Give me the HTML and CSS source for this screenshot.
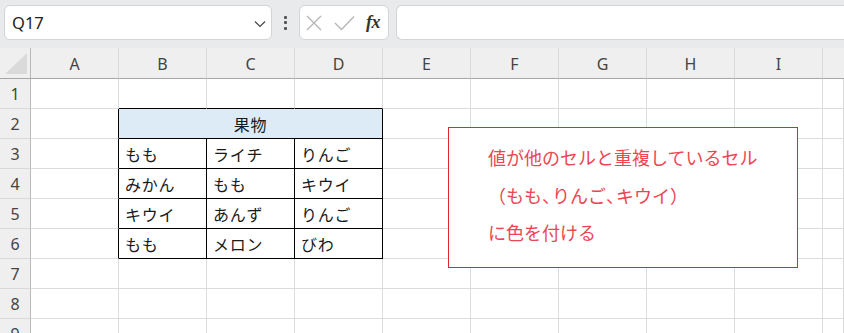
FILE: index.html
```html
<!DOCTYPE html>
<html lang="ja">
<head>
<meta charset="utf-8">
<title>Excel</title>
<link rel="stylesheet" href="styles.css">
</head>
<body>
<div class="toolbar">
  <div class="namebox">
    <span class="name">Q17</span>
    <svg class="chev" width="12" height="8" viewBox="0 0 12 8"><path d="M1 1.5 L6 6.5 L11 1.5" fill="none" stroke="#444" stroke-width="1.2"/></svg>
  </div>
  <div class="dots"><i></i><i></i><i></i></div>
  <div class="fxbox">
    <svg width="16" height="16" viewBox="0 0 16 16"><path d="M1 1 L15 15 M15 1 L1 15" stroke="#b4b4b4" stroke-width="1.3" fill="none"/></svg>
    <svg width="21" height="16" viewBox="0 0 21 16"><path d="M1 8 L7.5 14.5 L20 1.5" stroke="#b4b4b4" stroke-width="1.3" fill="none"/></svg>
    <span class="fx">fx</span>
  </div>
  <div class="formula"></div>
</div>
<div class="sheet">
  <div class="grid">
    <div class="corner"><svg width="23" height="22" viewBox="0 0 23 22"><path d="M22 0 L22 21 L0 21 Z" fill="#dadada"/></svg></div>
    <div class="ch">A</div><div class="ch">B</div><div class="ch">C</div><div class="ch">D</div><div class="ch">E</div><div class="ch">F</div><div class="ch">G</div><div class="ch">H</div><div class="ch">I</div><div class="ch last"></div>

    <div class="rh">1</div><div class="c"></div><div class="c tb"></div><div class="c tb"></div><div class="c tb"></div><div class="c"></div><div class="c"></div><div class="c"></div><div class="c"></div><div class="c"></div><div class="c"></div>

    <div class="rh">2</div><div class="c tr"></div><div class="c head">果物</div><div class="c"></div><div class="c"></div><div class="c"></div><div class="c"></div><div class="c"></div><div class="c"></div>

    <div class="rh">3</div><div class="c tr"></div><div class="c t">もも</div><div class="c t">ライチ</div><div class="c t">りんご</div><div class="c"></div><div class="c"></div><div class="c"></div><div class="c"></div><div class="c"></div><div class="c"></div>

    <div class="rh">4</div><div class="c tr"></div><div class="c t">みかん</div><div class="c t">もも</div><div class="c t">キウイ</div><div class="c"></div><div class="c"></div><div class="c"></div><div class="c"></div><div class="c"></div><div class="c"></div>

    <div class="rh">5</div><div class="c tr"></div><div class="c t">キウイ</div><div class="c t">あんず</div><div class="c t">りんご</div><div class="c"></div><div class="c"></div><div class="c"></div><div class="c"></div><div class="c"></div><div class="c"></div>

    <div class="rh">6</div><div class="c tr"></div><div class="c t">もも</div><div class="c t">メロン</div><div class="c t">びわ</div><div class="c"></div><div class="c"></div><div class="c"></div><div class="c"></div><div class="c"></div><div class="c"></div>

    <div class="rh">7</div><div class="c"></div><div class="c"></div><div class="c"></div><div class="c"></div><div class="c"></div><div class="c"></div><div class="c"></div><div class="c"></div><div class="c"></div><div class="c"></div>

    <div class="rh">8</div><div class="c"></div><div class="c"></div><div class="c"></div><div class="c"></div><div class="c"></div><div class="c"></div><div class="c"></div><div class="c"></div><div class="c"></div><div class="c"></div>

    <div class="rh">9</div><div class="c"></div><div class="c"></div><div class="c"></div><div class="c"></div><div class="c"></div><div class="c"></div><div class="c"></div><div class="c"></div><div class="c"></div><div class="c"></div>
  </div>
  <div class="note">
    <p>値が他のセルと重複しているセル</p>
    <p>（もも<span class="cm">、</span>りんご<span class="cm">、</span>キウイ）</p>
    <p>に色を付ける</p>
  </div>
</div>
</body>
</html>
```

FILE: styles.css
```css
html, body {
  margin: 0;
  padding: 0;
  background: #ffffff;
  overflow: hidden;
}
body {
  width: 844px;
  height: 333px;
  font-family: "Noto Sans", "Noto Sans CJK JP", sans-serif;
}
.toolbar {
  height: 48px;
  background: #e9eaec;
  display: flex;
  align-items: flex-start;
  padding: 5px 0 0 4px;
  box-sizing: border-box;
}
.namebox {
  width: 268px;
  height: 35px;
  box-sizing: border-box;
  background: #fff;
  border: 1px solid #d3d4d6;
  border-radius: 6px;
  display: flex;
  align-items: center;
  justify-content: space-between;
  padding: 0 5px 0 7px;
}
.name {
  font-size: 16.5px;
  color: #222;
  font-family: "Noto Sans", sans-serif;
}
.chev { margin-top: 2px; }
.dots {
  width: 27px;
  height: 35px;
  display: flex;
  flex-direction: column;
  align-items: center;
  justify-content: center;
  gap: 2.5px;
}
.dots i {
  display: block;
  width: 3px;
  height: 3px;
  background: #555;
  border-radius: 1px;
}
.fxbox {
  width: 90px;
  height: 35px;
  box-sizing: border-box;
  background: #fff;
  border: 1px solid #d3d4d6;
  border-radius: 6px;
  display: flex;
  align-items: center;
  padding: 0 0 0 6px;
  gap: 12px;
}
.fx {
  font-family: "Liberation Serif", serif;
  font-style: italic;
  font-weight: bold;
  font-size: 18px;
  color: #333;
  margin-left: -1px;
  letter-spacing: -0.5px;
}
.formula {
  margin-left: 7px;
  flex: 1;
  height: 35px;
  background: #fff;
  border: 1px solid #d3d4d6;
  border-right: none;
  border-radius: 6px 0 0 6px;
  box-sizing: border-box;
}
.sheet {
  position: relative;
}
.grid {
  display: grid;
  grid-template-columns: 31px repeat(9, 88px) 1fr;
  grid-template-rows: 31px;
  grid-auto-rows: 30px;
}
.grid > div {
  box-sizing: border-box;
}
.corner {
  background: #efefef;
  border-right: 1px solid #b9b9b9;
  border-bottom: 1px solid #a6a6a6;
  display: flex;
  align-items: flex-start;
  padding: 5px 0 0 5px;
}
.ch {
  background: #efefef;
  border-right: 1px solid #d8d8d8;
  border-bottom: 1px solid #a6a6a6;
  display: flex;
  align-items: center;
  justify-content: center;
  font-size: 16px;
  color: #444;
  padding-top: 1px;
}
.ch.last { border-right: none; }
.rh {
  background: #efefef;
  border-right: 1px solid #b9b9b9;
  border-bottom: 1px solid #d8d8d8;
  display: flex;
  align-items: center;
  justify-content: center;
  font-size: 16px;
  color: #444;
}
.c {
  border-right: 1px solid #dcdcdc;
  border-bottom: 1px solid #dcdcdc;
  display: flex;
  align-items: center;
  font-family: "Noto Sans CJK JP", sans-serif;
  font-size: 16px;
  color: #1a1a1a;
  letter-spacing: 0.7px;
}
.c.tb { border-bottom-color: #000; }
.c.tr { border-right-color: #000; }
.c.t {
  border-right-color: #000;
  border-bottom-color: #000;
  padding-left: 6px;
}
.c.head {
  grid-column: span 3;
  background: #ddebf7;
  border-right-color: #000;
  border-bottom-color: #000;
  justify-content: center;
}
.note {
  position: absolute;
  left: 448px;
  top: 79px;
  width: 350px;
  height: 141px;
  box-sizing: border-box;
  border: 1px solid #e0262f;
  background: #fff;
  padding: 11px 0 0 39px;
  font-family: "Noto Sans CJK JP", sans-serif;
  font-size: 18px;
  line-height: 37.5px;
  color: #ec4652;
}
.note p {
  margin: 0;
}
.note .cm {
  letter-spacing: -8px;
}
```
